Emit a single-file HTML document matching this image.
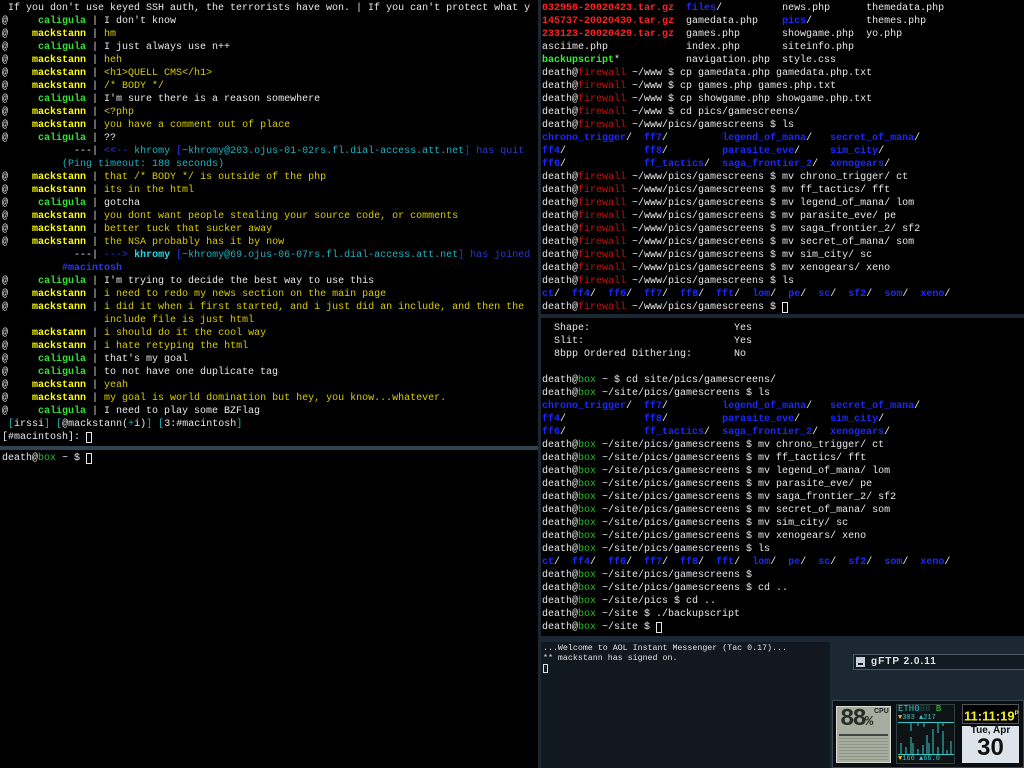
<!DOCTYPE html>
<html><head><meta charset="utf-8"><style>
html,body{margin:0;padding:0;width:1024px;height:768px;overflow:hidden;background:#1c2734}
pre{position:absolute;margin:0;font-family:"Liberation Mono","DejaVu Sans Mono",monospace;font-size:10px;line-height:13px;color:#e8e8e8;white-space:pre;}
.pane{position:absolute;background:#000}
.g{color:#30e030;font-weight:bold}.y{color:#ffff00;font-weight:bold}.t{color:#d8cc00}
.c{color:#18b4c4}.b{color:#2838d8}.cb{color:#28d8e8;font-weight:bold}.bb{color:#2838e8;font-weight:bold}
.r{color:#ff2020;font-weight:bold}.fr{color:#c81010}.d{color:#1a28ff;font-weight:bold}.gb{color:#30f030;font-weight:bold}.gn{color:#20c020}
.cur{outline:1px solid #e8e8e8;outline-offset:-1px}
</style></head><body>
<div class="pane" style="left:0;top:0;width:538px;height:446px"></div>
<div class="pane" style="left:0;top:450px;width:538px;height:318px"></div>
<div style="position:absolute;left:0;top:446px;width:538px;height:4px;background:#34424f"></div>
<div class="pane" style="left:541px;top:0;width:483px;height:314px"></div>
<div class="pane" style="left:541px;top:318px;width:483px;height:318px"></div>
<pre style="left:2px;top:2px"> If you don't use keyed SSH auth, the terrorists have won. | If you can't protect what y
@     <span class="g">caligula</span> | I don't know
@    <span class="y">mackstann</span> | <span class="t">hm</span>
@     <span class="g">caligula</span> | I just always use n++
@    <span class="y">mackstann</span> | <span class="t">heh</span>
@    <span class="y">mackstann</span> | <span class="t">&lt;h1&gt;QUELL CMS&lt;/h1&gt;</span>
@    <span class="y">mackstann</span> | <span class="t">/* BODY */</span>
@     <span class="g">caligula</span> | I'm sure there is a reason somewhere
@    <span class="y">mackstann</span> | <span class="t">&lt;?php</span>
@    <span class="y">mackstann</span> | <span class="t">you have a comment out of place</span>
@     <span class="g">caligula</span> | ??
            ---| <span class="b">&lt;&lt;--</span> <span class="c">khromy</span> <span class="b">[</span><span class="c">~khromy@203.ojus-01-02rs.fl.dial-access.att.net</span><span class="b">]</span> <span class="b">has quit</span>
          <span class="c">(Ping timeout: 180 seconds)</span>
@    <span class="y">mackstann</span> | <span class="t">that /* BODY */ is outside of the php</span>
@    <span class="y">mackstann</span> | <span class="t">its in the html</span>
@     <span class="g">caligula</span> | gotcha
@    <span class="y">mackstann</span> | <span class="t">you dont want people stealing your source code, or comments</span>
@    <span class="y">mackstann</span> | <span class="t">better tuck that sucker away</span>
@    <span class="y">mackstann</span> | <span class="t">the NSA probably has it by now</span>
            ---| <span class="b">---&gt;</span> <span class="cb">khromy</span> <span class="b">[</span><span class="c">~khromy@69.ojus-06-07rs.fl.dial-access.att.net</span><span class="b">]</span> <span class="b">has joined</span>
          <span class="bb">#macintosh</span>
@     <span class="g">caligula</span> | I'm trying to decide the best way to use this
@    <span class="y">mackstann</span> | <span class="t">i need to redo my news section on the main page</span>
@    <span class="y">mackstann</span> | <span class="t">i did it when i first started, and i just did an include, and then the</span>
                 <span class="t">include file is just html</span>
@    <span class="y">mackstann</span> | <span class="t">i should do it the cool way</span>
@    <span class="y">mackstann</span> | <span class="t">i hate retyping the html</span>
@     <span class="g">caligula</span> | that's my goal
@     <span class="g">caligula</span> | to not have one duplicate tag
@    <span class="y">mackstann</span> | <span class="t">yeah</span>
@    <span class="y">mackstann</span> | <span class="t">my goal is world domination but hey, you know...whatever.</span>
@     <span class="g">caligula</span> | I need to play some BZFlag
 <span class="c">[</span>irssi<span class="c">]</span> <span class="c">[</span>@mackstann(<span class="c">+</span>i)<span class="c">]</span> <span class="c">[</span>3:#macintosh<span class="c">]</span>
[#macintosh]: <span class="cur"> </span></pre>
<pre style="left:2px;top:452px">death@<span class="gn">box</span> ~ $ <span class="cur"> </span></pre>
<pre style="left:542px;top:2px"><span class="r">032956-20020423.tar.gz</span>  <span class="d">files</span>/          news.php      themedata.php
<span class="r">145737-20020430.tar.gz</span>  gamedata.php    <span class="d">pics</span>/         themes.php
<span class="r">233123-20020429.tar.gz</span>  games.php       showgame.php  yo.php
asciime.php             index.php       siteinfo.php
<span class="gb">backupscript</span>*           navigation.php  style.css
death@<span class="fr">firewall</span> ~/www $ cp gamedata.php gamedata.php.txt
death@<span class="fr">firewall</span> ~/www $ cp games.php games.php.txt
death@<span class="fr">firewall</span> ~/www $ cp showgame.php showgame.php.txt
death@<span class="fr">firewall</span> ~/www $ cd pics/gamescreens/
death@<span class="fr">firewall</span> ~/www/pics/gamescreens $ ls
<span class="d">chrono_trigger</span>/  <span class="d">ff7</span>/         <span class="d">legend_of_mana</span>/   <span class="d">secret_of_mana</span>/
<span class="d">ff4</span>/             <span class="d">ff8</span>/         <span class="d">parasite_eve</span>/     <span class="d">sim_city</span>/
<span class="d">ff6</span>/             <span class="d">ff_tactics</span>/  <span class="d">saga_frontier_2</span>/  <span class="d">xenogears</span>/
death@<span class="fr">firewall</span> ~/www/pics/gamescreens $ mv chrono_trigger/ ct
death@<span class="fr">firewall</span> ~/www/pics/gamescreens $ mv ff_tactics/ fft
death@<span class="fr">firewall</span> ~/www/pics/gamescreens $ mv legend_of_mana/ lom
death@<span class="fr">firewall</span> ~/www/pics/gamescreens $ mv parasite_eve/ pe
death@<span class="fr">firewall</span> ~/www/pics/gamescreens $ mv saga_frontier_2/ sf2
death@<span class="fr">firewall</span> ~/www/pics/gamescreens $ mv secret_of_mana/ som
death@<span class="fr">firewall</span> ~/www/pics/gamescreens $ mv sim_city/ sc
death@<span class="fr">firewall</span> ~/www/pics/gamescreens $ mv xenogears/ xeno
death@<span class="fr">firewall</span> ~/www/pics/gamescreens $ ls
<span class="d">ct</span>/  <span class="d">ff4</span>/  <span class="d">ff6</span>/  <span class="d">ff7</span>/  <span class="d">ff8</span>/  <span class="d">fft</span>/  <span class="d">lom</span>/  <span class="d">pe</span>/  <span class="d">sc</span>/  <span class="d">sf2</span>/  <span class="d">som</span>/  <span class="d">xeno</span>/
death@<span class="fr">firewall</span> ~/www/pics/gamescreens $ <span class="cur"> </span></pre>
<pre style="left:542px;top:322px">  Shape:                        Yes
  Slit:                         Yes
  8bpp Ordered Dithering:       No

death@<span class="gn">box</span> ~ $ cd site/pics/gamescreens/
death@<span class="gn">box</span> ~/site/pics/gamescreens $ ls
<span class="d">chrono_trigger</span>/  <span class="d">ff7</span>/         <span class="d">legend_of_mana</span>/   <span class="d">secret_of_mana</span>/
<span class="d">ff4</span>/             <span class="d">ff8</span>/         <span class="d">parasite_eve</span>/     <span class="d">sim_city</span>/
<span class="d">ff6</span>/             <span class="d">ff_tactics</span>/  <span class="d">saga_frontier_2</span>/  <span class="d">xenogears</span>/
death@<span class="gn">box</span> ~/site/pics/gamescreens $ mv chrono_trigger/ ct
death@<span class="gn">box</span> ~/site/pics/gamescreens $ mv ff_tactics/ fft
death@<span class="gn">box</span> ~/site/pics/gamescreens $ mv legend_of_mana/ lom
death@<span class="gn">box</span> ~/site/pics/gamescreens $ mv parasite_eve/ pe
death@<span class="gn">box</span> ~/site/pics/gamescreens $ mv saga_frontier_2/ sf2
death@<span class="gn">box</span> ~/site/pics/gamescreens $ mv secret_of_mana/ som
death@<span class="gn">box</span> ~/site/pics/gamescreens $ mv sim_city/ sc
death@<span class="gn">box</span> ~/site/pics/gamescreens $ mv xenogears/ xeno
death@<span class="gn">box</span> ~/site/pics/gamescreens $ ls
<span class="d">ct</span>/  <span class="d">ff4</span>/  <span class="d">ff6</span>/  <span class="d">ff7</span>/  <span class="d">ff8</span>/  <span class="d">fft</span>/  <span class="d">lom</span>/  <span class="d">pe</span>/  <span class="d">sc</span>/  <span class="d">sf2</span>/  <span class="d">som</span>/  <span class="d">xeno</span>/
death@<span class="gn">box</span> ~/site/pics/gamescreens $
death@<span class="gn">box</span> ~/site/pics/gamescreens $ cd ..
death@<span class="gn">box</span> ~/site/pics $ cd ..
death@<span class="gn">box</span> ~/site $ ./backupscript
death@<span class="gn">box</span> ~/site $ <span class="cur"> </span></pre>
<!-- AIM window -->
<div style="position:absolute;left:541px;top:642px;width:289px;height:126px;background:#111820"></div>
<pre style="left:543px;top:644px;font-size:8.3px;line-height:10px;color:#e0e0e0">...Welcome to AOL Instant Messenger (Tac 0.17)...
** mackstann has signed on.
<span class="cur" style="outline-color:#e0e0e0"> </span></pre>
<!-- gFTP -->
<div style="position:absolute;left:853px;top:654px;width:171px;height:16px;background:#121a22;border:1px solid #4a5a6a;border-right:none;box-sizing:border-box"></div>
<div style="position:absolute;left:856px;top:657px;width:9px;height:10px;background:#c8d0dc"></div>
<div style="position:absolute;left:858px;top:663px;width:5px;height:2px;background:#121a22"></div>
<div style="position:absolute;left:871px;top:655px;font:bold 10px 'Liberation Sans',sans-serif;color:#e0e4e8;letter-spacing:1px;line-height:14px">gFTP 2.0.11</div>
<!-- dock -->
<div style="position:absolute;left:832px;top:700px;width:192px;height:68px;background:#0a0e12;border:1px solid #3a4654;box-sizing:border-box"></div>
<div style="position:absolute;left:836px;top:706px;width:55px;height:57px;background:#a8ae9f;border:1px solid #d8dcd0;box-sizing:border-box"></div>
<div style="position:absolute;left:840px;top:708px;font:bold 24px 'Liberation Mono',monospace;color:#282c24;line-height:24px;letter-spacing:-2px">88<span style="font-size:14px">%</span></div>
<div style="position:absolute;left:874px;top:708px;font:bold 7px 'Liberation Sans',sans-serif;color:#222">CPU</div>
<div style="position:absolute;left:839px;top:734px;width:49px;height:2px;background:#444"></div>
<div style="position:absolute;left:839px;top:738px;width:49px;height:22px;background:repeating-linear-gradient(0deg,#8f9588 0 1px,#a8ae9f 1px 3px)"></div>
<div style="position:absolute;left:896px;top:704px;width:59px;height:60px;background:#0e1416;border:1px solid #304040;box-sizing:border-box"></div>
<div style="position:absolute;left:898px;top:704px;font:9px 'Liberation Mono',monospace;color:#38c8c8;line-height:10px">ETH0<span style="color:#2a5050">88</span> <span style="color:#30e030">B</span></div>
<div style="position:absolute;left:898px;top:714px;font:7px 'Liberation Mono',monospace;color:#38c8c8;line-height:8px"><span style="color:#e8c020">▼</span>303 ▲217</div>
<div style="position:absolute;left:898px;top:722px;width:56px;height:1px;background:#38c8c8"></div>
<div style="position:absolute;left:898px;top:754px;width:56px;height:1px;background:#38c8c8"></div>
<svg style="position:absolute;left:898px;top:723px" width="56" height="31"><g stroke="#38c8c8" stroke-width="1">
<path d="M3 31V20M8 31V24M13 31V14M15 31V20M20 31V26M25 31V22M29 31V12M31 31V20M35 31V6M40 31V24M45 31V8M49 31V27M53 31V18M13 0V8M20 0V3M26 0V4M40 0V10M45 0V3"/></g></svg>
<div style="position:absolute;left:898px;top:755px;font:7px 'Liberation Mono',monospace;color:#38c8c8;line-height:8px"><span style="color:#e8c020">▼</span>166 ▲66.0</div>
<div style="position:absolute;left:962px;top:704px;width:57px;height:20px;background:#000;border:1px solid #555;box-sizing:border-box"></div>
<div style="position:absolute;left:964px;top:706px;font:bold 13px 'Liberation Sans',sans-serif;color:#f8f020;line-height:16px">11:11:19<sup style="font-size:6px">P</sup></div>
<div style="position:absolute;left:962px;top:726px;width:57px;height:37px;background:#dde3ea"></div>
<div style="position:absolute;left:962px;top:725px;width:57px;text-align:center;font:bold 10px 'Liberation Sans',sans-serif;color:#111;line-height:12px">Tue, Apr</div>
<div style="position:absolute;left:962px;top:734px;width:57px;text-align:center;font:bold 24px 'Liberation Sans',sans-serif;color:#111;line-height:28px">30</div>
</body></html>
